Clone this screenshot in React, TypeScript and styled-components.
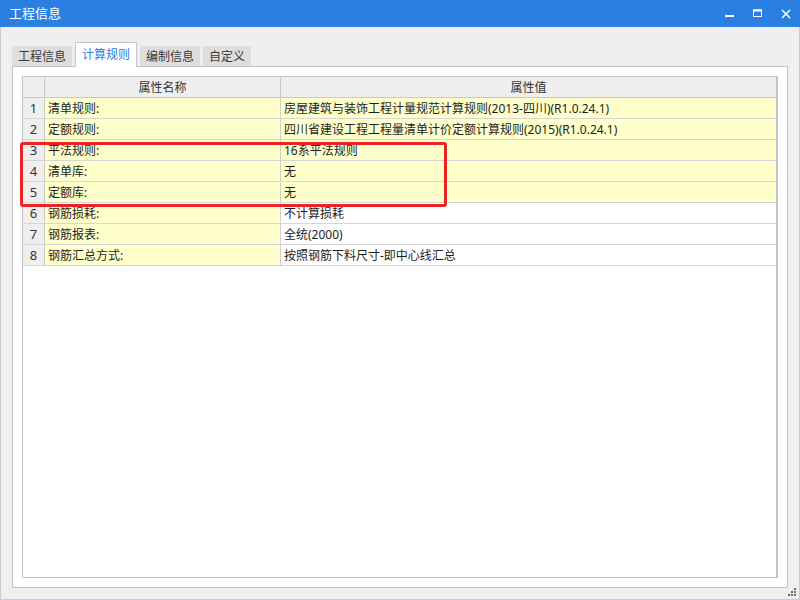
import React from "react";
import styled, { createGlobalStyle } from "styled-components";

const GlobalStyle = createGlobalStyle`
  html, body { margin: 0; padding: 0; background: #efefef; }
  body {
    font-family: "Noto Sans", "Noto Sans CJK SC", sans-serif;
    font-size: 12px;
    color: #222;
  }
  * { box-sizing: border-box; }
`;

const Window = styled.div`
  position: relative;
  width: 800px;
  height: 600px;
  display: flex;
  flex-direction: column;
  overflow: hidden;
`;

const TitleBar = styled.div`
  height: 27px;
  flex: none;
  background: #2b7fe0;
  display: flex;
  align-items: center;
  justify-content: space-between;
`;

const Title = styled.span`
  color: #fff;
  font-size: 13px;
  padding-left: 9px;
  line-height: 27px;
`;

const Controls = styled.div`
  display: flex;
  height: 100%;
`;

const ControlButton = styled.div`
  width: 28px;
  height: 27px;
  display: flex;
  align-items: center;
  justify-content: center;
  svg { display: block; }
`;

const Body = styled.div`
  flex: 1;
  display: flex;
  flex-direction: column;
  background: #efefef;
  border: 1px solid #c8ccd2;
  border-top: none;
  padding: 15px 11px 11px 11px;
`;

const TabBar = styled.div`
  display: flex;
  align-items: flex-end;
  gap: 3px;
  height: 24px;
  position: relative;
  z-index: 1;
`;

const Tab = styled.div<{ $active?: boolean }>`
  padding: 0 6px;
  font-size: 12px;
  display: flex;
  align-items: center;
  justify-content: center;
  border-radius: 2px 2px 0 0;
  ${(p) =>
    p.$active
      ? `
    height: 25px;
    margin-bottom: -1px;
    background: #ffffff;
    color: #2b7de0;
    border: 1px solid #c4c4c4;
    border-bottom: none;
    padding-bottom: 2px;
  `
      : `
    height: 20px;
    background: #dedede;
    color: #3a3a3a;
  `}
`;

const Panel = styled.div`
  flex: 1;
  display: flex;
  flex-direction: column;
  background: #fff;
  border: 1px solid #c4c4c4;
  padding: 9px;
`;

const Grid = styled.div`
  position: relative;
  flex: 1;
  background: #fff;
  border: 1px solid #c4c4c4;
  border-right: 2px solid #c4c4c4;
`;

const Row = styled.div`
  display: grid;
  grid-template-columns: 22px 236px 1fr;
  height: 21px;
`;

const Cell = styled.div<{ $bg?: string; $align?: string }>`
  background: ${(p) => p.$bg || "#fff"};
  border-right: 1px solid #cfcfcf;
  border-bottom: 1px solid #d6d6d6;
  display: flex;
  align-items: center;
  justify-content: ${(p) => p.$align || "flex-start"};
  padding-left: ${(p) => (p.$align === "center" ? "0" : "3px")};
  white-space: nowrap;
  overflow: hidden;
  font-size: 12px;
  color: #1e1e1e;
  &:last-child { border-right: none; }
`;

const HeadCell = styled(Cell)`
  background: #efefef;
  justify-content: center;
  padding-left: 0;
  color: #333;
  border-right-color: #c8c8c8;
  border-bottom-color: #c8c8c8;
`;

const NumCell = styled(Cell)`
  background: #efefef;
  justify-content: center;
  padding-left: 0;
  color: #333;
  font-size: 13px;
  border-right-color: #c8c8c8;
`;

const Highlight = styled.div`
  position: absolute;
  left: -3px;
  top: 65px;
  width: 427px;
  height: 65px;
  border: 3px solid #ec2323;
  border-radius: 3px;
  pointer-events: none;
`;

const Grip = styled.svg`
  position: absolute;
  right: 3px;
  bottom: 3px;
`;

const rows: { name: string; value: string; yellowValue: boolean }[] = [
  { name: "清单规则:", value: "房屋建筑与装饰工程计量规范计算规则(2013-四川)(R1.0.24.1)", yellowValue: true },
  { name: "定额规则:", value: "四川省建设工程工程量清单计价定额计算规则(2015)(R1.0.24.1)", yellowValue: true },
  { name: "平法规则:", value: "16系平法规则", yellowValue: true },
  { name: "清单库:", value: "无", yellowValue: true },
  { name: "定额库:", value: "无", yellowValue: true },
  { name: "钢筋损耗:", value: "不计算损耗", yellowValue: false },
  { name: "钢筋报表:", value: "全统(2000)", yellowValue: false },
  { name: "钢筋汇总方式:", value: "按照钢筋下料尺寸-即中心线汇总", yellowValue: false },
];

const YELLOW = "#ffffcc";

export default function App() {
  return (
    <>
      <GlobalStyle />
      <Window>
        <TitleBar>
          <Title>工程信息</Title>
          <Controls>
            <ControlButton>
              <svg width="10" height="10" viewBox="0 0 10 10">
                <rect x="0" y="6" width="9" height="2" fill="#fff" />
              </svg>
            </ControlButton>
            <ControlButton>
              <svg width="10" height="10" viewBox="0 0 10 10">
                <rect x="0.5" y="1" width="8" height="6.5" fill="none" stroke="#fff" strokeWidth="1" />
                <rect x="0" y="0.5" width="9" height="2" fill="#fff" />
              </svg>
            </ControlButton>
            <ControlButton>
              <svg width="10" height="10" viewBox="0 0 10 10">
                <path d="M1 1 L9 9 M9 1 L1 9" stroke="#fff" strokeWidth="1.6" />
              </svg>
            </ControlButton>
          </Controls>
        </TitleBar>
        <Body>
          <TabBar>
            <Tab>工程信息</Tab>
            <Tab $active>计算规则</Tab>
            <Tab>编制信息</Tab>
            <Tab>自定义</Tab>
          </TabBar>
          <Panel>
            <Grid>
              <Row>
                <HeadCell />
                <HeadCell>属性名称</HeadCell>
                <HeadCell>属性值</HeadCell>
              </Row>
              {rows.map((r, i) => (
                <Row key={i}>
                  <NumCell>{i + 1}</NumCell>
                  <Cell $bg={YELLOW}>{r.name}</Cell>
                  <Cell $bg={r.yellowValue ? YELLOW : "#fff"}>{r.value}</Cell>
                </Row>
              ))}
              <Highlight />
            </Grid>
          </Panel>
        </Body>
        <Grip width="9" height="9" viewBox="0 0 9 9">
          <rect x="6" y="0" width="2" height="2" fill="#6e6e6e" />
          <rect x="3" y="3" width="2" height="2" fill="#6e6e6e" />
          <rect x="6" y="3" width="2" height="2" fill="#6e6e6e" />
          <rect x="0" y="6" width="2" height="2" fill="#6e6e6e" />
          <rect x="3" y="6" width="2" height="2" fill="#6e6e6e" />
          <rect x="6" y="6" width="2" height="2" fill="#6e6e6e" />
        </Grip>
      </Window>
    </>
  );
}
